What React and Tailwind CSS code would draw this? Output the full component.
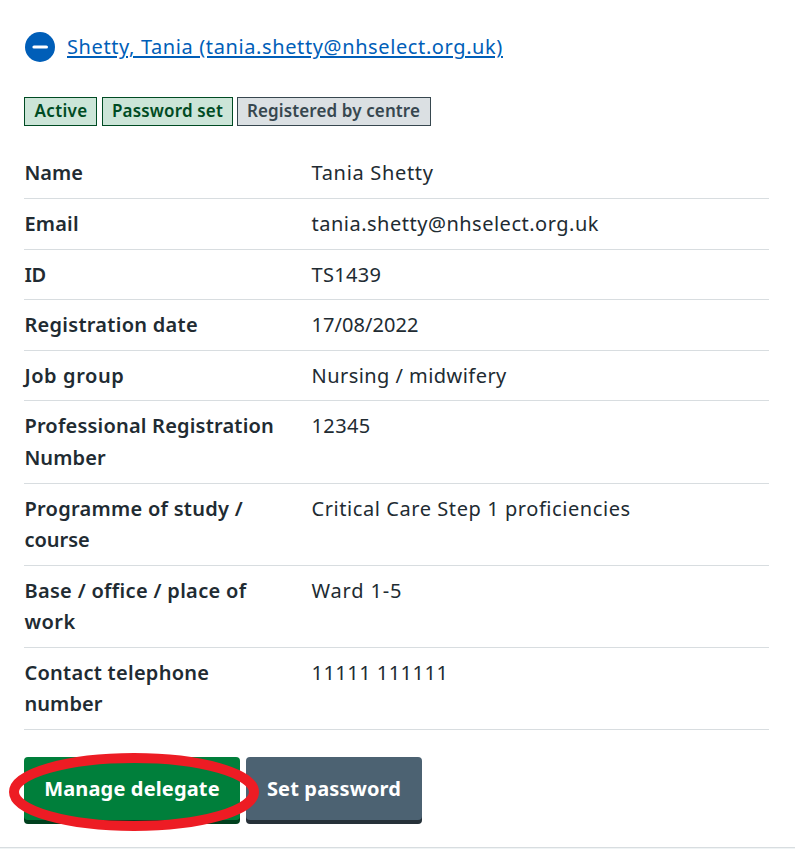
const rows = [
  { label: [["Name", "tracking-[0px]"]], value: "Tania Shetty", height: "h-[51px]", spacing: "tracking-[0.4px]", valueSpacing: "tracking-[0.68px]" },
  { label: [["Email", "tracking-[0.2px]"]], value: "tania.shetty@nhselect.org.uk", height: "h-[51px]", valueSpacing: "tracking-[0.5px]" },
  { label: [["ID", "tracking-[-0.4px]"]], value: "TS1439", height: "h-[50px]", valueSpacing: "tracking-[0.3px]" },
  { label: [["Registration date", "tracking-[0.28px]"]], value: "17/08/2022", height: "h-[51px]", valueSpacing: "tracking-[0.05px]" },
  { label: [["Job group", "tracking-[0.6px]"]], value: "Nursing / midwifery", height: "h-[50px]", valueSpacing: "tracking-[0.45px]" },
  { label: [["Professional Registration", "tracking-[0.2px]"], ["Number", "tracking-[0.1px]"]], value: "12345", height: "h-[83px] leading-[31.8px]", valueSpacing: "tracking-[0.4px]" },
  { label: [["Programme of study /", "tracking-[0.28px]"], ["course", "tracking-[0px]"]], value: "Critical Care Step 1 proficiencies", height: "h-[82px]", valueSpacing: "tracking-[0.57px]" },
  { label: [["Base / office / place of", "tracking-[0.32px]"], ["work", "tracking-[0.5px]"]], value: "Ward 1-5", height: "h-[82px]", valueSpacing: "tracking-[0.85px]" },
  { label: [["Contact telephone", "tracking-[0.27px]"], ["number", "tracking-[0.1px]"]], value: "11111 111111", height: "h-[82px]", valueSpacing: "tracking-[0.48px]" },
];

export default function App() {
  return (
    <main className="h-[849px] w-[795px] overflow-hidden bg-[#f0f4f5] font-['Noto_Sans',sans-serif] text-[20px] text-[#212b32]">
      <div className="flex h-[848px] flex-col border-b border-[#d8dde0] bg-white px-6 pt-8">
        <a href="#" className="flex h-[30px] items-center text-[#005eb8]">
          <svg viewBox="0 0 30 30" className="ml-[1px] size-[30px] shrink-0">
            <circle cx="15" cy="15" r="15" fill="#005eb8" />
            <path d="M9 15h12.4" stroke="#fff" strokeWidth="3.2" strokeLinecap="round" />
          </svg>
          <span className="ml-3 whitespace-nowrap tracking-[0.61px] underline decoration-2 underline-offset-[2px]">
            Shetty, Tania (tania.shetty@nhselect.org.uk)
          </span>
        </a>

        <div className="mt-[35px] flex h-[29px] text-[17px] font-semibold leading-[25px] whitespace-nowrap">
          <strong className="w-[73px] border border-[#004b23] bg-[#cce5d8] pl-[9.5px] font-semibold tracking-[0.35px] text-[#004b23]">Active</strong>
          <strong className="ml-[5px] w-[131px] border border-[#004b23] bg-[#cce5d8] pl-[9px] font-semibold tracking-[0.16px] text-[#004b23]">Password set</strong>
          <strong className="ml-1 w-[194px] border border-[#37474f] bg-[#dbe0e3] pl-[9px] font-semibold tracking-[0.11px] text-[#37474f]">Registered by centre</strong>
        </div>

        <dl className="mt-[22px] w-[745px]">
          {rows.map((row) => (
            <div key={row.value} className={`flex border-b border-[#d8dde0] pt-[9px] whitespace-nowrap leading-[31.3px] ${row.height}`}>
              <dt className="w-[287.5px] pl-[0.4px] font-semibold">
                {row.label.map(([line, spacing]) => (
                  <span key={line} className={`block ${spacing}`}>{line}</span>
                ))}
              </dt>
              <dd className={row.valueSpacing}>{row.value}</dd>
            </div>
          ))}
        </dl>

        <div className="relative mt-[27px] flex gap-[6px] font-bold leading-[63px] whitespace-nowrap text-white">
          <button className="h-[63px] w-[216px] rounded-[4px] bg-[#007f3b] tracking-[0.15px] shadow-[0_4px_0_#00401e]">Manage delegate</button>
          <button className="h-[63px] w-[176px] rounded-[4px] bg-[#4c6272] tracking-[0.15px] shadow-[0_4px_0_#263139]">Set password</button>
          <svg viewBox="0 0 250 78" className="pointer-events-none absolute -top-1 -left-[15px] h-[78px] w-[250px]">
            <ellipse cx="125" cy="39" rx="120" ry="34" fill="none" stroke="#ed1c24" strokeWidth="10" />
          </svg>
        </div>
      </div>
    </main>
  );
}
